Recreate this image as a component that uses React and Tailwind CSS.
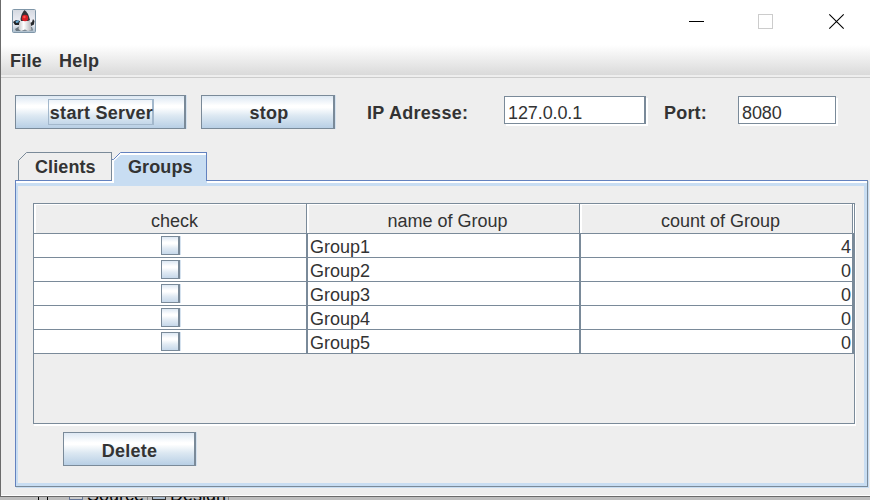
import React from "react";

const groups = [
  ["Group1", 4],
  ["Group2", 0],
  ["Group3", 0],
  ["Group4", 0],
  ["Group5", 0],
];

const metal = "bg-[linear-gradient(180deg,#dde8f3_0%,#ffffff_30%,#ffffff_36%,#dce8f2_62%,#b8cfe5_100%)]";
const metalLight = "bg-[linear-gradient(180deg,#dde8f3_0%,#ffffff_30%,#ffffff_40%,#e2ebf4_65%,#c6d8ea_100%)]";

function DukeIcon() {
  return (
    <svg width="24" height="24" viewBox="0 0 24 24" className="block">
      <defs>
        <linearGradient id="duke-bg" x1="0" y1="0" x2="0" y2="1">
          <stop offset="0" stopColor="#d4d8e0" />
          <stop offset="0.6" stopColor="#f2f2f8" />
          <stop offset="1" stopColor="#a9bccb" />
        </linearGradient>
        <linearGradient id="duke-body" x1="0" y1="0" x2="1" y2="0">
          <stop offset="0" stopColor="#c4c6c8" />
          <stop offset="0.4" stopColor="#ffffff" />
          <stop offset="1" stopColor="#b4b6ba" />
        </linearGradient>
      </defs>
      <rect x="0.5" y="0.5" width="23" height="23" rx="1" fill="url(#duke-bg)" stroke="#7f96a8" />
      <path d="M3 20 L7 17.5 L20 18 L21 21.5 L4 22Z" fill="#69757e" />
      <path d="M1 13 L4 11 L8 12 L7 16 L3 16Z" fill="#202428" />
      <path d="M3.5 12 L7 11 L6.5 13.5 L4 14Z" fill="#65a7d1" />
      <path d="M18 14 L20 13 L21 10 L22.5 12 L22 15.5 L19 17Z" fill="#282a2d" />
      <path d="M9 10 L17 10 Q19 13 19.5 21 L16 22 L13 20.5 L9 22 L6.5 20Q7 14 9 10Z" fill="url(#duke-body)" />
      <path d="M12.5 1 Q16 3 18 11 L16 12 L9 12 L8.5 10 Q9.5 4 12.5 1Z" fill="#303338" />
      <circle cx="13" cy="9" r="3.2" fill="#d81e25" />
      <circle cx="12.4" cy="8" r="1.2" fill="#fa5349" />
    </svg>
  );
}

function Button({ children, className, focused }) {
  return (
    <button className={`flex h-[34px] shrink-0 items-center justify-center border border-r-2 border-[#7a8a99] font-bold tracking-[0.27px] shadow-[1px_0_0_#d5e2ef] ${metal} ${className}`}>
      {focused ? (
        <span className="ml-[2px] flex h-[26px] w-[106px] items-center justify-center border border-r-2 border-[#a3b8cc] pt-[3px] pl-[2px] whitespace-nowrap">
          {children}
        </span>
      ) : (
        <span className="pt-[3px]">{children}</span>
      )}
    </button>
  );
}

function Field({ children, className }) {
  return (
    <div className={`flex h-[28px] shrink-0 items-center border border-[#7a8a99] bg-white pt-[6px] pl-[3px] tracking-[-0.1px] shadow-[2px_2px_0_#ffffff] ${className}`}>
      {children}
    </div>
  );
}

function InactiveTab({ children }) {
  return (
    <div className="flex h-[28px] w-[94px] shrink-0">
      <svg width="10" height="28" className="block shrink-0">
        <path d="M0.5 28 V8.5 L8.5 0.5 H10" fill="none" stroke="#7a8a99" />
      </svg>
      <div className="grow border-t border-r border-[#7a8a99] pt-[4px] pl-[7px] font-bold tracking-[0.1px]">{children}</div>
    </div>
  );
}

function ActiveTab({ children }) {
  return (
    <div className="flex h-[32px] w-[95px] shrink-0">
      <svg width="10" height="32" className="block shrink-0">
        <path d="M2 32 V9 L10 1 V32Z" fill="#c8ddf2" />
        <path d="M1 30 V8.6 L8 2 H10" fill="none" stroke="#ffffff" strokeWidth="2" />
        <path d="M0 7.5 H1.5 L8.5 0.5 H10" fill="none" stroke="#6382bf" />
      </svg>
      <div className="grow bg-[#c8ddf2]">
        <div className="h-[29px] border-t border-r border-[#6382bf] pt-[4px] pl-[6px] font-bold tracking-[0.1px] shadow-[inset_0_2px_0_#ffffff]">
          {children}
        </div>
      </div>
    </div>
  );
}

export default function App() {
  return (
    <div className="flex h-[500px] w-[870px] flex-col overflow-hidden bg-[#bdbdbd] font-['Liberation_Sans',Arial,sans-serif] text-[18px] leading-[21px] text-[#333333]">
      <main className="flex h-[497px] shrink-0 flex-col border-b border-l border-[#6b6b6b] bg-[#eeeeee] shadow-[inset_0_-1px_0_#ffffff]">
        <header className="flex h-[45px] shrink-0 justify-between bg-white pt-[9px] pl-[11px]">
          <DukeIcon />
          <svg width="190" height="26" className="block">
            <path d="M9 12.5 H24" fill="none" stroke="#000000" />
            <rect x="78.5" y="5.5" width="14" height="14" fill="none" stroke="#cccccc" />
            <path d="M149.3 5.3 L163.7 19.7 M163.7 5.3 L149.3 19.7" stroke="#000000" strokeWidth="1.1" />
          </svg>
        </header>
        <nav className="flex h-[30px] shrink-0 gap-[17px] bg-gradient-to-b from-white to-[#dadada] pt-[6px] pl-[9px] font-bold tracking-[0.27px]">
          <span>File</span>
          <span>Help</span>
        </nav>
        <div className="h-[3px] shrink-0 border-b border-[#cccccc]" />
        <section className="flex h-[74px] shrink-0 pt-[17px] pl-[14px]">
          <Button className="w-[171px]" focused>start Server</Button>
          <Button className="ml-[15px] w-[134px] pl-[3px]">stop</Button>
          <span className="ml-[32px] w-[137px] shrink-0 pt-[8px] font-bold tracking-[0.3px]">IP Adresse:</span>
          <Field className="mt-px w-[142px] border-r-2">127.0.0.1</Field>
          <span className="ml-[18px] w-[74px] shrink-0 pt-[8px] font-bold tracking-[0.2px]">Port:</span>
          <Field className="mt-px w-[98px]">8080</Field>
        </section>
        <div className="z-10 flex h-[28px] shrink-0 pl-[17px]">
          <InactiveTab>Clients</InactiveTab>
          <ActiveTab>Groups</ActiveTab>
        </div>
        <section className="ml-[14px] h-[307px] w-[853px] shrink-0 border border-t-[#6382bf] border-r-[#7a8a99] border-b-[#7a8a99] border-l-[#6382bf] bg-[#eeeeee] shadow-[1px_1px_0_#c8ddf2]">
          <div className="h-full border-t-2 border-t-white">
            <div className="h-full border-t-[3px] border-r-[3px] border-b-[3px] border-l-2 border-[#c8ddf2] pt-[17px] pl-[15px]">
              <div className="h-[221px] w-[822px] border border-[#7a8a99] shadow-[1px_2px_0_#ffffff]">
                <div className="grid h-[30px] grid-cols-[273px_273px_273px_1fr] border-b border-[#7a8a99] text-center">
                  <div className="border-r border-[#7a8a99] pt-[7px] pl-[9px] shadow-[inset_2px_1px_0_#ffffff]">check</div>
                  <div className="border-r border-[#7a8a99] pt-[7px] pl-[9px] shadow-[inset_2px_1px_0_#ffffff]">name of Group</div>
                  <div className="border-r border-[#7a8a99] pt-[7px] pl-[9px] shadow-[inset_2px_1px_0_#ffffff]">count of Group</div>
                  <div className="bg-white" />
                </div>
                {groups.map(([name, count]) => (
                  <div key={name} className="grid h-[24px] grid-cols-[274px_273px_273px] border-b border-[#7a8a99] bg-white">
                    <div className="border-r-2 border-[#7a8a99] pt-[2px] pl-[127px]">
                      <div className={`h-[19px] w-[19px] border border-r-2 border-[#7a8a99] shadow-[1px_0_0_#d5e2ef] ${metalLight}`} />
                    </div>
                    <div className="border-r-2 border-[#7a8a99] pt-[3px] pl-[2px]">{name}</div>
                    <div className="border-r-2 border-[#7a8a99] pt-[3px] pr-px text-right">{count}</div>
                  </div>
                ))}
              </div>
              <Button className="mt-[8px] ml-[30px] w-[133px] pt-[2px] pl-px">Delete</Button>
            </div>
          </div>
        </section>
      </main>
      <footer className="flex h-[3px] shrink-0 overflow-hidden bg-[#bdbdbd] pl-[38px] text-black">
        <span className="mr-[8px] h-[3px] w-px bg-black" />
        <span className="mr-[21px] h-[3px] w-px bg-black" />
        <span className="h-[3px] w-[14px] border-x border-b border-[#667799] bg-[#cccccc]" />
        <span className="-mt-[12px] ml-[4px]">Source</span>
        <span className="ml-[3px] h-[3px] w-px bg-[#888888]" />
        <span className="ml-[4px] h-[3px] w-[14px] border-x border-b border-[#333333] bg-[#aabbcc]" />
        <span className="-mt-[12px] ml-[4px]">Design</span>
        <span className="ml-[2px] h-[3px] w-px bg-[#888888]" />
      </footer>
    </div>
  );
}
